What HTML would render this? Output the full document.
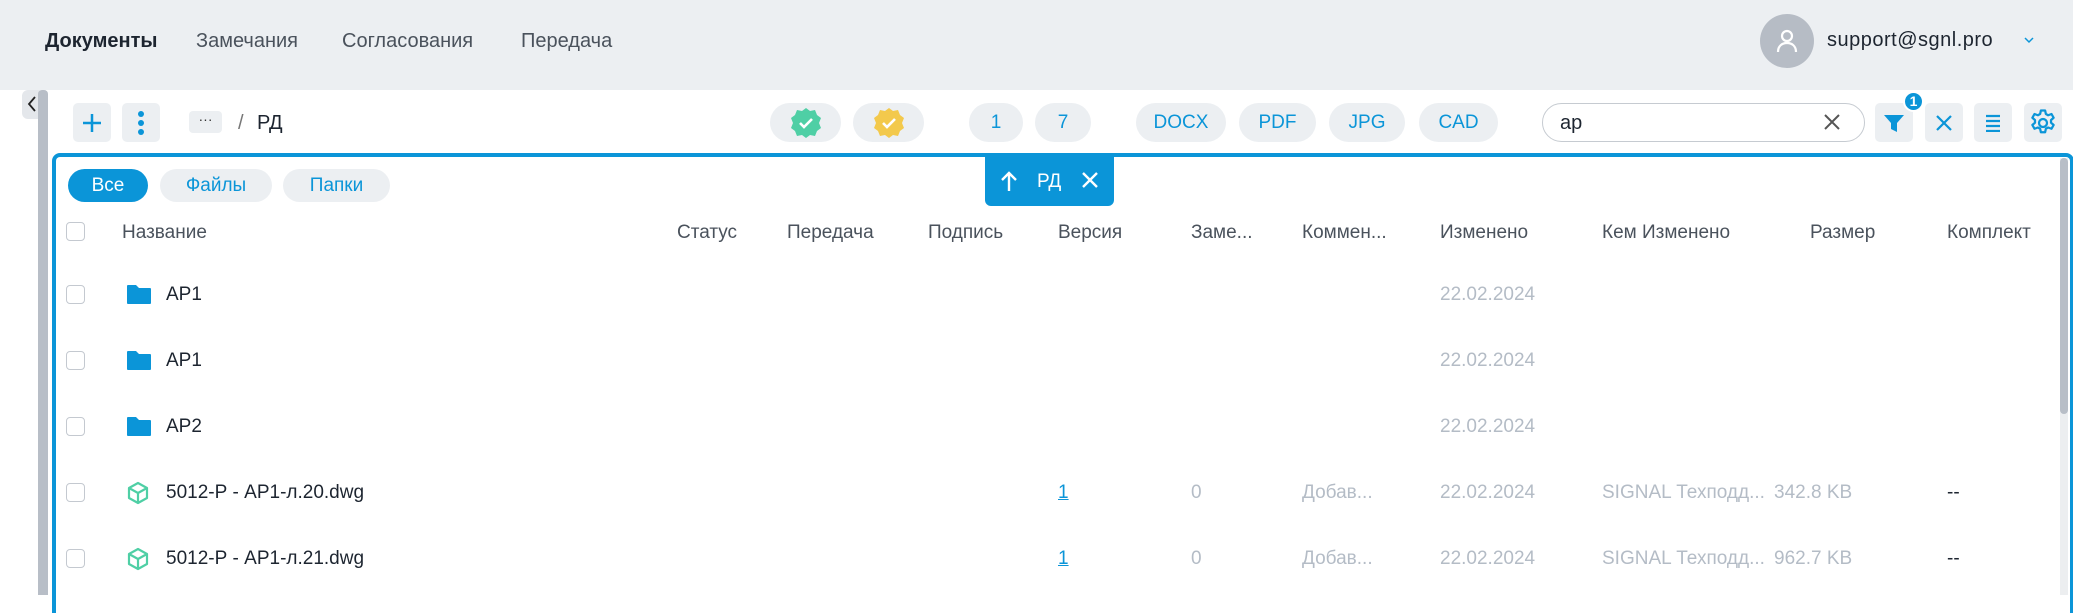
<!DOCTYPE html>
<html><head><meta charset="utf-8"><style>
*{margin:0;padding:0;box-sizing:border-box}
body{width:2073px;height:595px;overflow:hidden;background:#fff;font-family:"Liberation Sans",sans-serif;position:relative;color:#1d2530}
.a{position:absolute}
.hdr{left:0;top:0;width:2073px;height:90px;background:#eceff2}
.nav{top:30px;font-size:20px;color:#4a525c}
.pill{position:absolute;top:103px;height:39px;border-radius:20px;background:#eceff2;color:#0b95d8;font-size:19px;display:flex;align-items:center;justify-content:center}
.ib{position:absolute;top:103px;width:38px;height:39px;border-radius:5px;background:#eceff2;display:flex;align-items:center;justify-content:center}
.th{position:absolute;top:222px;font-size:19px;color:#4a525c;white-space:nowrap}
.cb{position:absolute;left:66px;width:19px;height:19px;border:1.5px solid #c4c9d0;border-radius:4px;background:#fff}
.nm{position:absolute;left:166px;font-size:19px;color:#1d2530;white-space:nowrap}
.g{position:absolute;font-size:19px;color:#b4bcc6;white-space:nowrap}
.fp{position:absolute;top:169px;height:33px;border-radius:17px;background:#eceff2;color:#0b95d8;font-size:19px;display:flex;align-items:center;justify-content:center}
</style></head><body>
<div class="a hdr"></div>
<div class="a nav" style="left:45px;color:#1d2530;font-weight:bold">Документы</div>
<div class="a nav" style="left:196px">Замечания</div>
<div class="a nav" style="left:342px">Согласования</div>
<div class="a nav" style="left:521px">Передача</div>
<div class="a" style="left:1760px;top:14px;width:54px;height:54px;border-radius:50%;background:#b6bcc5"></div>
<svg class="a" style="left:1775px;top:28px" width="24" height="26" viewBox="0 0 24 26"><circle cx="12" cy="8" r="5" fill="none" stroke="#fff" stroke-width="2.2"/><path d="M3 24c0-6 4-9 9-9s9 3 9 9" fill="none" stroke="#fff" stroke-width="2.2"/></svg>
<div class="a" style="left:1827px;top:29px;font-size:20px;color:#1d2530;letter-spacing:0.5px">support@sgnl.pro</div>
<svg class="a" style="left:2024px;top:37px" width="10" height="8"><path d="M1 1l4 4 4-4" fill="none" stroke="#0b95d8" stroke-width="1.5"/></svg>

<div class="a" style="left:22px;top:90px;width:18px;height:29px;background:#e4e7eb;border-radius:6px 0 0 6px"></div>
<svg class="a" style="left:27px;top:96px" width="10" height="16"><path d="M8 1L2 8l6 7" fill="none" stroke="#222" stroke-width="1.8"/></svg>
<div class="a" style="left:38px;top:90px;width:10px;height:505px;background:#b8bec7;border-radius:4px 4px 0 0"></div>

<div class="ib" style="left:73px"><svg width="22" height="22"><path d="M11 2v18M2 11h18" stroke="#0b95d8" stroke-width="2.5"/></svg></div>
<div class="ib" style="left:122px"><svg width="8" height="26"><circle cx="4" cy="4" r="3" fill="#0b95d8"/><circle cx="4" cy="13" r="3" fill="#0b95d8"/><circle cx="4" cy="22" r="3" fill="#0b95d8"/></svg></div>
<div class="a" style="left:189px;top:111px;width:33px;height:22px;background:#eceff2;border-radius:4px;font-size:14px;text-align:center;line-height:16px;color:#333">···</div>
<div class="a" style="left:238px;top:112px;font-size:20px;color:#777">/</div>
<div class="a" style="left:257px;top:112px;font-size:20px;color:#1d2530">РД</div>

<div class="pill" style="left:770px;width:71px"><svg width="32" height="32" viewBox="0 0 32 32"><path d="M16 1l4 3 5-1 2 5 4 3-2 5 2 5-4 3-2 5-5-1-4 3-4-3-5 1-2-5-4-3 2-5-2-5 4-3 2-5 5 1z" fill="#4fcfa5"/><path d="M10 16l4 4 8-8" fill="none" stroke="#fff" stroke-width="2.6"/></svg></div>
<div class="pill" style="left:853px;width:71px"><svg width="32" height="32" viewBox="0 0 32 32"><path d="M16 1l4 3 5-1 2 5 4 3-2 5 2 5-4 3-2 5-5-1-4 3-4-3-5 1-2-5-4-3 2-5-2-5 4-3 2-5 5 1z" fill="#f3c94c"/><path d="M10 16l4 4 8-8" fill="none" stroke="#fff" stroke-width="2.6"/></svg></div>
<div class="pill" style="left:969px;width:54px">1</div>
<div class="pill" style="left:1035px;width:56px">7</div>
<div class="pill" style="left:1136px;width:90px">DOCX</div>
<div class="pill" style="left:1239px;width:77px">PDF</div>
<div class="pill" style="left:1329px;width:76px">JPG</div>
<div class="pill" style="left:1419px;width:79px">CAD</div>

<div class="a" style="left:1542px;top:103px;width:323px;height:39px;border:1.5px solid #c6cbd1;border-radius:20px"></div>
<div class="a" style="left:1560px;top:112px;font-size:20px;color:#1d2530">ар</div>
<svg class="a" style="left:1823px;top:113px" width="18" height="18"><path d="M2 2l14 14M16 2L2 16" stroke="#555" stroke-width="2"/></svg>

<div class="ib" style="left:1875px"><svg width="22" height="22"><path d="M1 3h20l-7 8v9l-6-3v-6z" fill="#0b95d8"/></svg></div>
<div class="a" style="left:1903px;top:91px;width:21px;height:21px;border-radius:50%;background:#0b95d8;border:2px solid #fff;color:#fff;font-size:14px;font-weight:bold;text-align:center;line-height:17px">1</div>
<div class="ib" style="left:1925px"><svg width="18" height="18"><path d="M2 2l14 14M16 2L2 16" stroke="#0b95d8" stroke-width="2.2"/></svg></div>
<div class="ib" style="left:1974px"><svg width="18" height="18"><path d="M2 2h14M2 7h14M2 12h14M2 17h14" stroke="#0b95d8" stroke-width="2.2"/></svg></div>
<div class="ib" style="left:2024px"><svg width="30" height="30" viewBox="0 0 24 24"><path d="M10.3 2h3.4l.6 2.8 1.8 1 2.7-1 1.7 3-2.1 1.9v2l2.1 1.9-1.7 3-2.7-1-1.8 1-.6 2.8h-3.4l-.6-2.8-1.8-1-2.7 1-1.7-3 2.1-1.9v-2L3.5 7.8l1.7-3 2.7 1 1.8-1z" fill="none" stroke="#0b95d8" stroke-width="1.8" stroke-linejoin="round"/><circle cx="12" cy="12" r="3.2" fill="none" stroke="#0b95d8" stroke-width="1.8"/></svg></div>

<div class="a" style="left:52px;top:153px;width:2022px;height:460px;border:4.5px solid #0b95d8;border-bottom:none;border-radius:8px 8px 0 0"></div>
<div class="a" style="left:2060px;top:158px;width:8px;height:437px;background:#eceef0"></div>
<div class="a" style="left:2060px;top:158px;width:8px;height:256px;background:#b8bec7;border-radius:4px"></div>

<div class="a" style="left:985px;top:155px;width:129px;height:51px;background:#0b95d8;border-radius:0 0 6px 6px"></div>
<svg class="a" style="left:1000px;top:170px" width="18" height="22"><path d="M9 21V3M2 10l7-7 7 7" fill="none" stroke="#fff" stroke-width="2.4"/></svg>
<div class="a" style="left:1037px;top:171px;color:#fff;font-size:19px">РД</div>
<svg class="a" style="left:1082px;top:172px" width="16" height="16"><path d="M1 1l14 14M15 1L1 15" stroke="#fff" stroke-width="2.4"/></svg>

<div class="fp" style="left:68px;width:80px;background:#0b95d8;color:#fff">Все</div>
<div class="fp" style="left:160px;width:112px">Файлы</div>
<div class="fp" style="left:283px;width:107px">Папки</div>

<div class="cb" style="top:222px"></div>
<div class="th" style="left:122px">Название</div>
<div class="th" style="left:677px">Статус</div>
<div class="th" style="left:787px">Передача</div>
<div class="th" style="left:928px">Подпись</div>
<div class="th" style="left:1058px">Версия</div>
<div class="th" style="left:1191px">Заме...</div>
<div class="th" style="left:1302px">Коммен...</div>
<div class="th" style="left:1440px">Изменено</div>
<div class="th" style="left:1602px">Кем Изменено</div>
<div class="th" style="left:1810px">Размер</div>
<div class="th" style="left:1947px">Комплект</div>

<div class="cb" style="top:285px"></div>
<svg class="a" style="left:126px;top:284px" width="26" height="21"><path d="M1 2q0-1 1-1h8l3 3h11q1 0 1 1v14q0 1-1 1H2q-1 0-1-1z" fill="#0b95d8"/></svg>
<div class="nm" style="top:284px">АР1</div>
<div class="g" style="left:1440px;top:284px">22.02.2024</div>

<div class="cb" style="top:351px"></div>
<svg class="a" style="left:126px;top:350px" width="26" height="21"><path d="M1 2q0-1 1-1h8l3 3h11q1 0 1 1v14q0 1-1 1H2q-1 0-1-1z" fill="#0b95d8"/></svg>
<div class="nm" style="top:350px">АР1</div>
<div class="g" style="left:1440px;top:350px">22.02.2024</div>

<div class="cb" style="top:417px"></div>
<svg class="a" style="left:126px;top:416px" width="26" height="21"><path d="M1 2q0-1 1-1h8l3 3h11q1 0 1 1v14q0 1-1 1H2q-1 0-1-1z" fill="#0b95d8"/></svg>
<div class="nm" style="top:416px">АР2</div>
<div class="g" style="left:1440px;top:416px">22.02.2024</div>

<div class="cb" style="top:483px"></div>
<svg class="a" style="left:126px;top:481px" width="24" height="24" viewBox="0 0 24 24"><path d="M12 2l9 5v10l-9 5-9-5V7z M3 7l9 5 9-5 M12 12v10" fill="none" stroke="#4fcfa5" stroke-width="2.2" stroke-linejoin="round"/></svg>
<div class="nm" style="top:482px">5012-Р - АР1-л.20.dwg</div>
<div class="a" style="left:1058px;top:482px;font-size:19px;color:#0b95d8;text-decoration:underline">1</div>
<div class="g" style="left:1191px;top:482px">0</div>
<div class="g" style="left:1302px;top:482px">Добав...</div>
<div class="g" style="left:1440px;top:482px">22.02.2024</div>
<div class="g" style="left:1602px;top:482px">SIGNAL Техподд...</div>
<div class="g" style="left:1774px;top:482px">342.8 KB</div>
<div class="a" style="left:1947px;top:482px;font-size:19px;color:#1d2530">--</div>

<div class="cb" style="top:549px"></div>
<svg class="a" style="left:126px;top:547px" width="24" height="24" viewBox="0 0 24 24"><path d="M12 2l9 5v10l-9 5-9-5V7z M3 7l9 5 9-5 M12 12v10" fill="none" stroke="#4fcfa5" stroke-width="2.2" stroke-linejoin="round"/></svg>
<div class="nm" style="top:548px">5012-Р - АР1-л.21.dwg</div>
<div class="a" style="left:1058px;top:548px;font-size:19px;color:#0b95d8;text-decoration:underline">1</div>
<div class="g" style="left:1191px;top:548px">0</div>
<div class="g" style="left:1302px;top:548px">Добав...</div>
<div class="g" style="left:1440px;top:548px">22.02.2024</div>
<div class="g" style="left:1602px;top:548px">SIGNAL Техподд...</div>
<div class="g" style="left:1774px;top:548px">962.7 KB</div>
<div class="a" style="left:1947px;top:548px;font-size:19px;color:#1d2530">--</div>
</body></html>
